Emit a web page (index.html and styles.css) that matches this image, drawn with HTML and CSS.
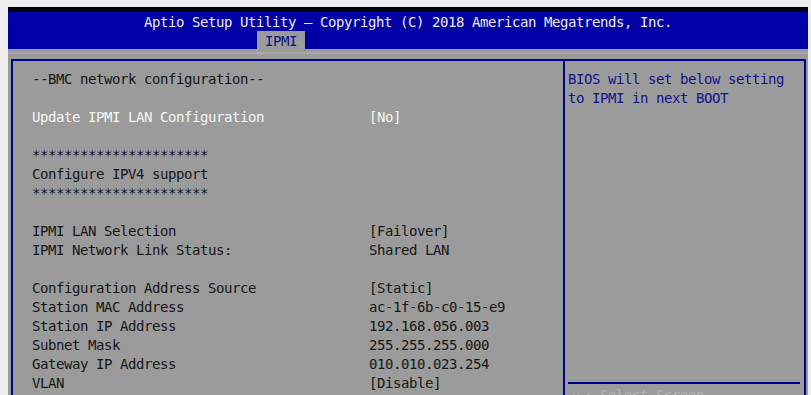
FILE: index.html
```html
<!DOCTYPE html>
<html lang="en">
<head>
<meta charset="utf-8">
<title>Aptio Setup Utility - IPMI</title>
<link rel="stylesheet" href="styles.css">
</head>
<body>
<div class="screen">
  <div class="topbar"></div>
  <header class="header">
    <div class="title">Aptio Setup Utility – Copyright (C) 2018 American Megatrends, Inc.</div>
    <nav class="tabs"><span class="tab">IPMI</span></nav>
  </header>
  <div class="band"><div class="band-line"></div></div>
  <main class="panel">
    <section class="settings">
      <div class="row"><span class="label">--BMC network configuration--</span></div>
      <div class="row blank"></div>
      <div class="row selected"><span class="label">Update IPMI LAN Configuration</span><span class="value">[No]</span></div>
      <div class="row blank"></div>
      <div class="row"><span class="label">**********************</span></div>
      <div class="row"><span class="label">Configure IPV4 support</span></div>
      <div class="row"><span class="label">**********************</span></div>
      <div class="row blank"></div>
      <div class="row"><span class="label">IPMI LAN Selection</span><span class="value">[Failover]</span></div>
      <div class="row"><span class="label">IPMI Network Link Status:</span><span class="value">Shared LAN</span></div>
      <div class="row blank"></div>
      <div class="row"><span class="label">Configuration Address Source</span><span class="value">[Static]</span></div>
      <div class="row"><span class="label">Station MAC Address</span><span class="value">ac-1f-6b-c0-15-e9</span></div>
      <div class="row"><span class="label">Station IP Address</span><span class="value">192.168.056.003</span></div>
      <div class="row"><span class="label">Subnet Mask</span><span class="value">255.255.255.000</span></div>
      <div class="row"><span class="label">Gateway IP Address</span><span class="value">010.010.023.254</span></div>
      <div class="row"><span class="label">VLAN</span><span class="value">[Disable]</span></div>
    </section>
    <aside class="help">
      <div class="help-text">BIOS will set below setting<br>to IPMI in next BOOT</div>
      <div class="help-sep"></div>
      <div class="keys">→←: Select Screen</div>
    </aside>
  </main>
</div>
</body>
</html>
```
FILE: styles.css
```css
html, body {
  margin: 0;
  padding: 0;
  background: #eeeeee;
  overflow: hidden;
}

body {
  padding: 7px 0 0 8px;
  font-family: "DejaVu Sans Mono", "Liberation Mono", monospace;
  font-size: 14px;
  letter-spacing: -0.43px;
  line-height: 19px;
}

.screen {
  width: 800px;
  height: 420px;
  background: #9b9b9b;
  display: flex;
  flex-direction: column;
}

.topbar {
  height: 5px;
  background: linear-gradient(#000000, #05052a);
}

.header {
  background: #0000a4;
  height: 37px;
  box-sizing: border-box;
  padding-top: 1px;
  display: flex;
  flex-direction: column;
}

.title {
  color: #ececec;
  text-align: center;
  height: 18px;
}

.tabs {
  display: flex;
  padding-left: 249px;
}

.tab {
  background: #9b9b9b;
  color: #10108a;
  height: 18px;
  line-height: 20px;
  padding: 0 8px;
}

.band {
  height: 10px;
  padding-top: 3px;
  box-sizing: border-box;
}

.band-line {
  height: 2px;
  background: #a9a9a9;
}

.panel {
  display: flex;
  margin-left: 3px;
  width: 795px;
  flex: 1;
}

.settings {
  width: 552px;
  box-sizing: border-box;
  border-left: 2px solid #00008e;
  border-top: 2px solid #00008e;
  padding: 9px 0 0 19px;
}

.row {
  display: grid;
  grid-template-columns: 337px auto;
  height: 19px;
  color: #161616;
  white-space: pre;
}

.row.selected {
  color: #f6f6f6;
}

.help {
  width: 243px;
  box-sizing: border-box;
  border-left: 2px solid #00008e;
  border-right: 2px solid #00008e;
  border-top: 2px solid #00008e;
  padding: 9px 4px 0 3px;
  display: flex;
  flex-direction: column;
}

.help-text {
  color: #12128c;
  height: 307px;
  border-bottom: 1px solid #a6a6a6;
}

.help-sep {
  margin-top: 4px;
  height: 2px;
  background: #00008e;
}

.keys {
  margin-top: 2px;
  color: #b4b4b4;
}
```
